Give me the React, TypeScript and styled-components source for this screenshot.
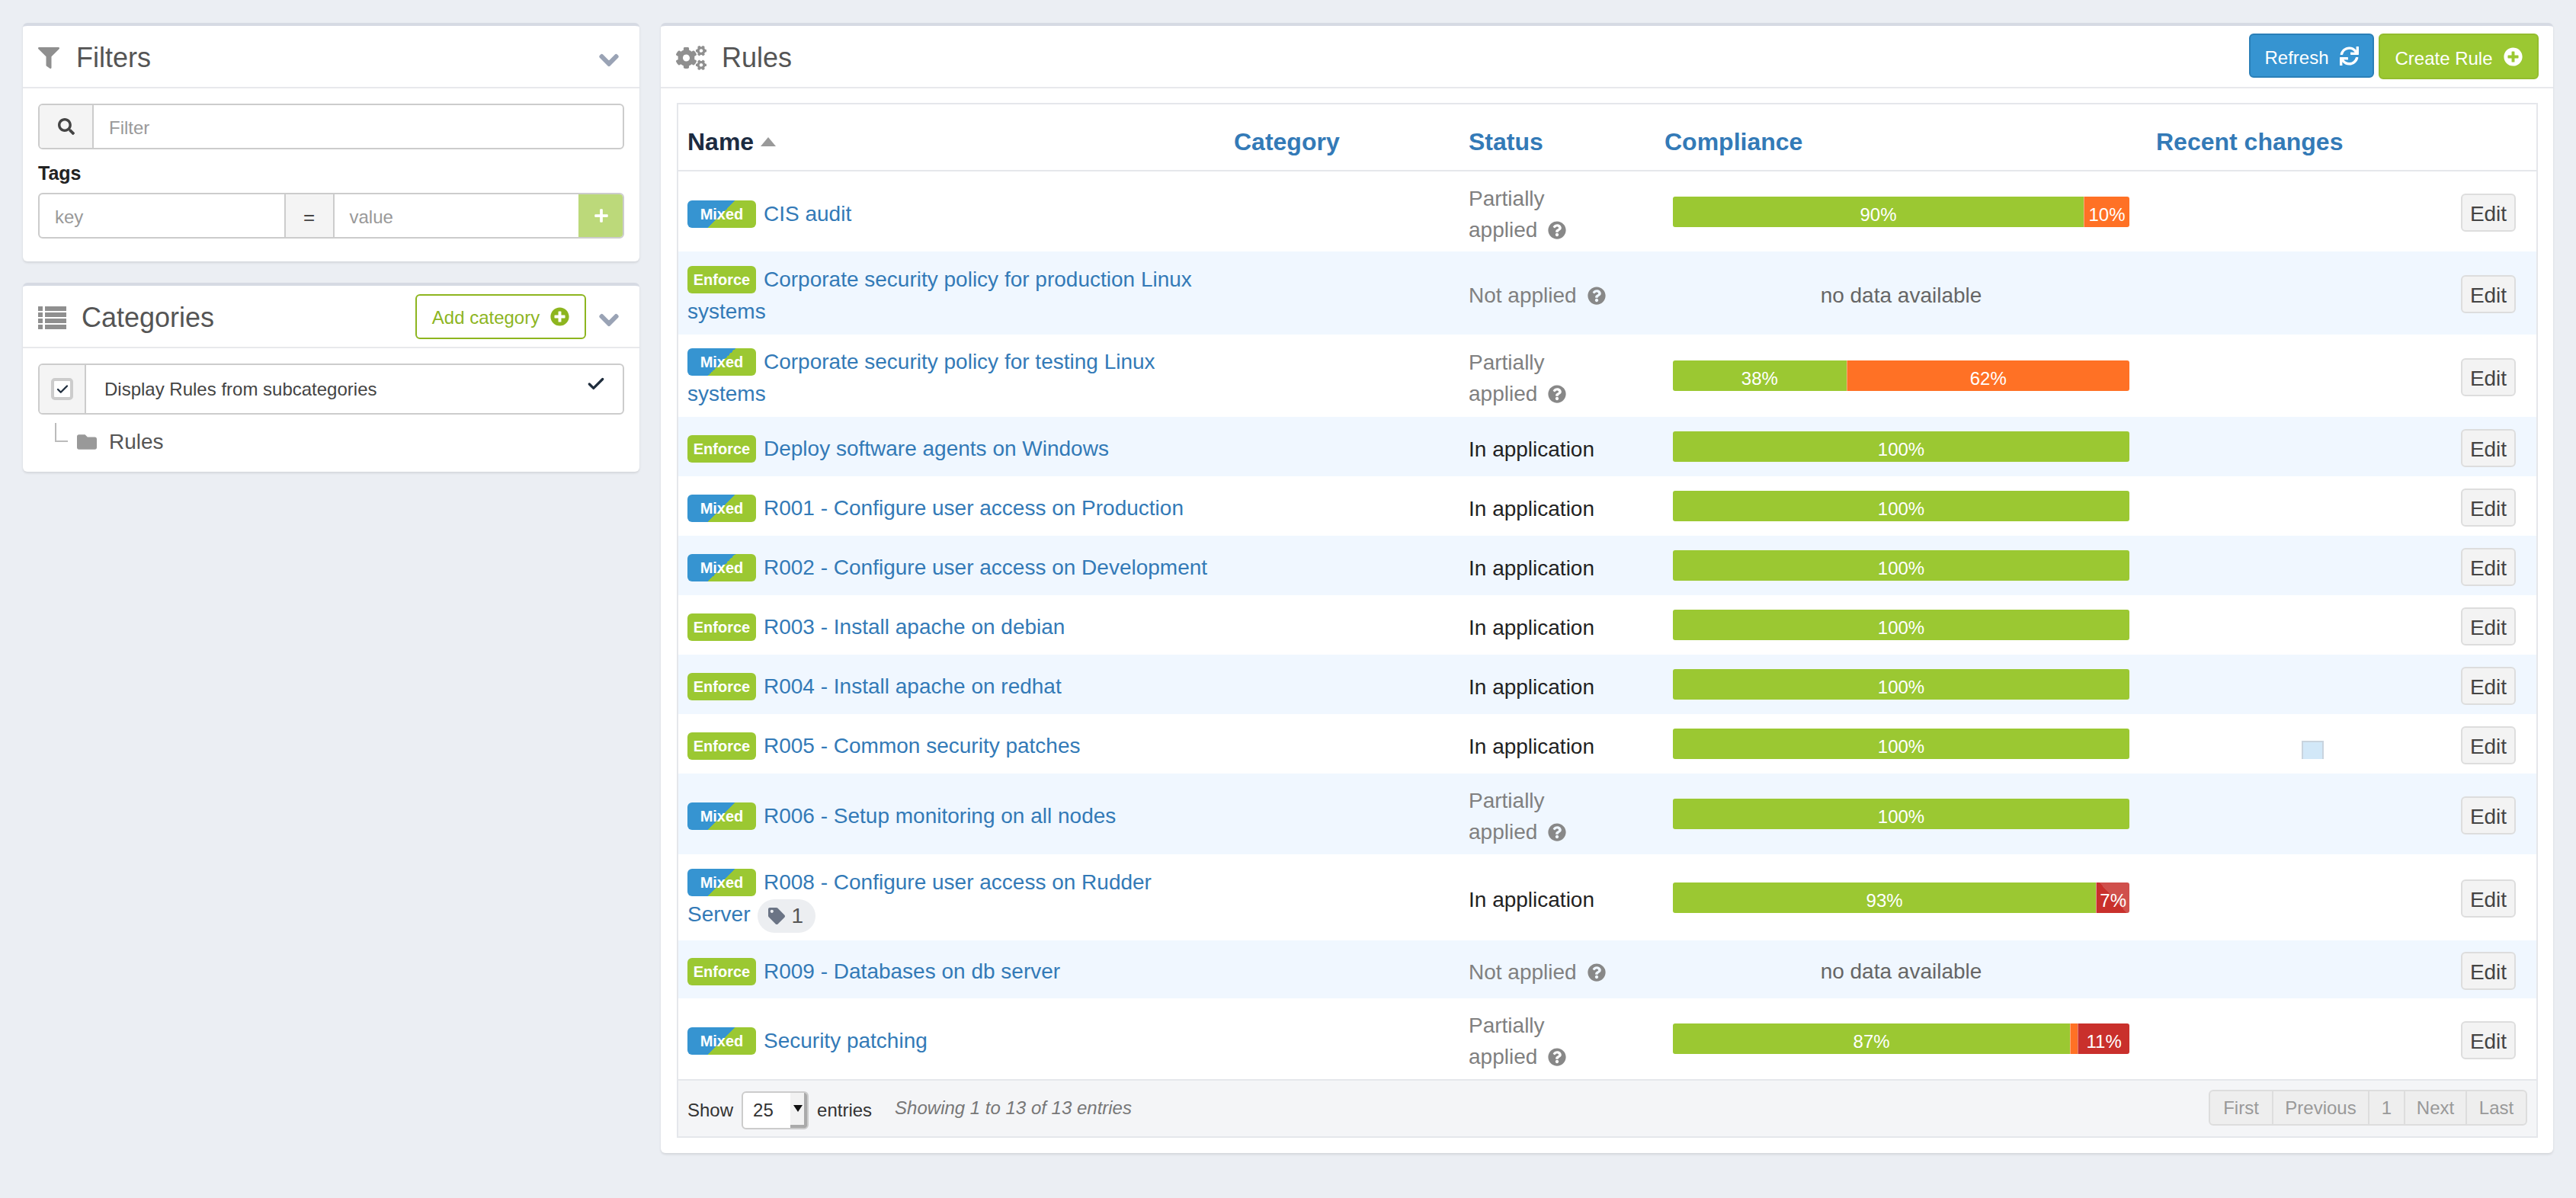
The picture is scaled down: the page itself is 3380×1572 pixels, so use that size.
import React from "react";
import styled, { createGlobalStyle } from "styled-components";
import { Check } from "lucide-react";
import {
  FaChevronDown,
  FaCogs,
  FaFilter,
  FaFolder,
  FaPlus,
  FaPlusCircle,
  FaQuestionCircle,
  FaSearch,
  FaSync,
  FaTag,
} from "react-icons/fa";

const GlobalStyle = createGlobalStyle`
  * { box-sizing: border-box; }
  html, body { margin: 0; padding: 0; }
  body {
    background: #ebeef3;
    font-family: "Liberation Sans", Arial, sans-serif;
    color: #333;
  }
`;

const Page = styled.div`
  display: flex;
  align-items: flex-start;
  gap: 28px;
  padding: 30px;
  min-height: 1572px;
`;

const LeftColumn = styled.div`
  width: 809px;
  flex: none;
  display: flex;
  flex-direction: column;
  gap: 28px;
`;

const Panel = styled.section<{ $grow?: boolean }>`
  background: #fff;
  border-top: 4px solid #d6dae3;
  border-radius: 6px;
  box-shadow: 0 2px 3px rgba(0, 0, 0, 0.1);
  ${(p) => (p.$grow ? "flex: 1; min-width: 0;" : "")}
`;

const PanelHead = styled.header`
  height: 82px;
  display: flex;
  align-items: center;
  padding: 0 20px;
  border-bottom: 2px solid #e8e9ec;
`;

const PanelTitle = styled.h2`
  margin: 0;
  flex: 1;
  display: flex;
  align-items: center;
  padding-top: 4px;
  font-size: 36px;
  font-weight: 400;
  color: #555;
`;

const TitleIcon = styled.span<{ $gap: number }>`
  display: inline-flex;
  color: #8f8f8f;
  margin-right: ${(p) => p.$gap}px;
`;

const Chevron = styled(FaChevronDown)`
  color: #9aa3b5;
  stroke: currentColor;
  stroke-width: 30;
  font-size: 28px;
  margin: 10px 6px 0 16px;
`;

const PanelBody = styled.div<{ $bottom: number }>`
  padding: 20px 20px ${(p) => p.$bottom}px;
`;

const InputGroup = styled.div<{ $height: number }>`
  display: flex;
  height: ${(p) => p.$height}px;
  border: 2px solid #ccc;
  border-radius: 6px;
  overflow: hidden;
`;

const Addon = styled.span<{ $width: number }>`
  flex: none;
  width: ${(p) => p.$width}px;
  display: flex;
  align-items: center;
  justify-content: center;
  background: #f4f4f4;
  color: #444;
  font-size: 22px;
  border-right: 2px solid #ccc;
`;

const EqualAddon = styled(Addon)`
  border-left: 2px solid #ccc;
  font-size: 26px;
  padding-top: 4px;
`;

const FieldText = styled.span`
  flex: 1 1 0;
  min-width: 0;
  display: flex;
  align-items: center;
  padding: 3px 20px 0;
  font-size: 24px;
  color: #999;
`;

const TagsLabel = styled.div`
  margin: 16px 0 11px;
  font-size: 25px;
  line-height: 30px;
  font-weight: 700;
  color: #222;
`;

const AddTag = styled.span`
  flex: none;
  width: 60px;
  margin: -2px -2px -2px 0;
  background: #bcd97a;
  color: #fff;
  display: flex;
  align-items: center;
  justify-content: center;
  font-size: 20px;
`;

const OutlineButton = styled.span`
  height: 59px;
  width: 224px;
  display: flex;
  align-items: center;
  justify-content: center;
  gap: 14px;
  padding-top: 3px;
  border: 2px solid #8db51f;
  border-radius: 6px;
  color: #8db51f;
  font-size: 24px;
  svg { font-size: 25px; margin-top: -3px; }
`;

const CheckBox = styled.span`
  width: 29px;
  height: 29px;
  border: 4px solid #ccc;
  border-radius: 5px;
  background: #fff;
  display: flex;
  align-items: center;
  justify-content: center;
  color: #1f2d3d;
`;

const OptionText = styled.span`
  flex: 1;
  display: flex;
  align-items: center;
  justify-content: space-between;
  padding: 0 22px 0 24px;
  font-size: 24px;
  color: #444;
  svg { color: #1f2d3d; margin-top: -14px; }
`;

const TreeRow = styled.div`
  display: flex;
  align-items: center;
  height: 55px;
  padding: 16px 0 0 22px;
  font-size: 28px;
  color: #555;
`;

const TreeElbow = styled.span`
  width: 17px;
  height: 25px;
  margin: -24px 12px 0 0;
  border-left: 2px solid #bbb;
  border-bottom: 2px solid #bbb;
`;

const FolderIcon = styled(FaFolder)`
  color: #999;
  font-size: 26px;
  margin-right: 16px;
`;

const HeadActions = styled.div`
  display: flex;
  gap: 6px;
  margin-right: -1px;
`;

const ActionButton = styled.span<{ $color: string; $edge: string; $width: number; $height: number }>`
  width: ${(p) => p.$width}px;
  height: ${(p) => p.$height}px;
  display: flex;
  align-items: center;
  justify-content: center;
  gap: 14px;
  padding-top: 6px;
  background: ${(p) => p.$color};
  border: 2px solid ${(p) => p.$edge};
  border-radius: 6px;
  color: #fff;
  font-size: 24px;
  svg { font-size: 25px; margin-top: -6px; }
`;

const RulesBody = styled.div`
  padding: 19px 20px 20px 21px;
`;

const TableBox = styled.div`
  border: 2px solid #e5e7eb;
`;

const Table = styled.table`
  width: 100%;
  table-layout: fixed;
  border-collapse: collapse;
`;

const HeadRow = styled.tr`
  height: 87px;
  border-bottom: 2px solid #e5e7eb;
`;

const HeadCell = styled.th<{ $active?: boolean; $width?: number }>`
  ${(p) => (p.$width ? `width: ${p.$width}px;` : "")}
  padding: 12px 12px 0 12px;
  text-align: left;
  font-size: 32px;
  font-weight: 700;
  color: ${(p) => (p.$active ? "#1c2b41" : "#337ab7")};
`;

const SortArrow = styled.span`
  display: inline-block;
  margin-left: 9px;
  vertical-align: 5px;
  border-left: 10px solid transparent;
  border-right: 10px solid transparent;
  border-bottom: 12px solid #999;
`;

const Row = styled.tr<{ $stripe: boolean; $height: number }>`
  height: ${(p) => p.$height}px;
  background: ${(p) => (p.$stripe ? "#f0f7ff" : "#fff")};
`;

const Cell = styled.td<{ $right?: boolean; $nudge?: boolean }>`
  padding: ${(p) => (p.$nudge ? "6px" : "0")} 12px 0;
  font-size: 28px;
  line-height: 42px;
  ${(p) => (p.$right ? "text-align: right; padding: 3px 27px 0 12px;" : "")}
`;

const Badge = styled.span<{ $mixed: boolean }>`
  display: inline-block;
  width: 90px;
  height: 36px;
  margin-right: 10px;
  border-radius: 6px;
  vertical-align: 2px;
  text-align: center;
  font-size: 20px;
  line-height: 36px;
  font-weight: 700;
  color: #fff;
  background: ${(p) =>
    p.$mixed ? "linear-gradient(135deg, #3694d1 50%, #9bc832 50%)" : "#9bc832"};
`;

const RuleLink = styled.a`
  color: #337ab7;
  text-decoration: none;
`;

const TagPill = styled.span`
  display: inline-flex;
  align-items: center;
  gap: 8px;
  height: 44px;
  margin-left: 10px;
  padding: 0 16px 0 14px;
  border-radius: 22px;
  background: #eceef1;
  color: #555;
  vertical-align: middle;
  svg { color: #6b7485; font-size: 22px; }
`;

const StatusText = styled.span<{ $muted: boolean }>`
  display: block;
  line-height: 41px;
  color: ${(p) => (p.$muted ? "#808080" : "#222")};
`;

const HelpIcon = styled(FaQuestionCircle)`
  color: #888;
  font-size: 24px;
  margin-left: 14px;
  vertical-align: -3px;
`;

const Bar = styled.div`
  display: flex;
  width: 599px;
  height: 40px;
  margin-left: 11px;
  border-radius: 3px;
  overflow: hidden;
`;

const BarPart = styled.div<{ $kind: string }>`
  display: flex;
  justify-content: center;
  padding-top: 5px;
  font-size: 24px;
  line-height: 38px;
  color: #fff;
  background: ${(p) =>
    p.$kind === "ok"
      ? "#9bc832"
      : p.$kind === "warn"
      ? "#ff7125"
      : p.$kind === "errorLight"
      ? "linear-gradient(48deg, #c9302c 50%, #d0504c 50%)"
      : "#c9302c"};
  & + & { border-left: 1px solid rgba(255, 255, 255, 0.4); }
`;

const NoData = styled.div`
  width: 599px;
  margin-left: 11px;
  text-align: center;
  color: #666;
`;

const EditButton = styled.span`
  display: inline-block;
  width: 72px;
  height: 50px;
  background: #f3f3f3;
  border: 2px solid #ddd;
  border-radius: 6px;
  text-align: center;
  font-size: 28px;
  line-height: 50px;
  color: #444;
  vertical-align: middle;
`;

const Footer = styled.div`
  height: 75px;
  display: flex;
  align-items: center;
  padding: 4px 12px 0;
  background: #f4f5f7;
  border-top: 2px solid #e5e7eb;
  font-size: 24px;
  color: #333;
`;

const SelectBox = styled.span`
  display: flex;
  width: 88px;
  height: 50px;
  margin: 0 11px;
  padding-left: 13px;
  align-items: center;
  justify-content: space-between;
  background: #fff;
  border: 2px solid #ccc;
  border-radius: 6px;
  overflow: hidden;
`;

const SelectArrow = styled.span`
  width: 22px;
  height: 46px;
  position: relative;
  background: #f2f2f2;
  border-right: 4px solid #aaa;
  border-bottom: 4px solid #aaa;
  &::after {
    content: "";
    position: absolute;
    left: 4px;
    top: 16px;
    border-left: 6px solid transparent;
    border-right: 6px solid transparent;
    border-top: 9px solid #111;
  }
`;

const Info = styled.span`
  flex: 1;
  margin: -6px 0 0 30px;
  font-style: italic;
  color: #777;
`;

const Pager = styled.div`
  display: flex;
  height: 47px;
  margin-top: -6px;
  border: 2px solid #ddd;
  border-radius: 6px;
  background: #eee;
  overflow: hidden;
`;

const PageCell = styled.span<{ $width: number }>`
  width: ${(p) => p.$width}px;
  display: flex;
  align-items: center;
  justify-content: center;
  color: #999;
  & + & { border-left: 2px solid #ddd; }
`;

const RecentChart = styled.svg`
  display: block;
`;

type Part = { value: number; kind: string; label?: string };

type Rule = {
  mode: "Mixed" | "Enforce";
  name: string;
  status: "partial" | "none" | "applied";
  parts?: Part[];
  height: number;
  tag?: boolean;
  recent?: boolean;
};

const full: Part[] = [{ value: 100, kind: "ok", label: "100%" }];

const rules: Rule[] = [
  { mode: "Mixed", name: "CIS audit", status: "partial", height: 106, parts: [{ value: 90, kind: "ok", label: "90%" }, { value: 10, kind: "warn", label: "10%" }] },
  { mode: "Enforce", name: "Corporate security policy for production Linux systems", status: "none", height: 109 },
  { mode: "Mixed", name: "Corporate security policy for testing Linux systems", status: "partial", height: 108, parts: [{ value: 38, kind: "ok", label: "38%" }, { value: 62, kind: "warn", label: "62%" }] },
  { mode: "Enforce", name: "Deploy software agents on Windows", status: "applied", height: 78, parts: full },
  { mode: "Mixed", name: "R001 - Configure user access on Production", status: "applied", height: 78, parts: full },
  { mode: "Mixed", name: "R002 - Configure user access on Development", status: "applied", height: 78, parts: full },
  { mode: "Enforce", name: "R003 - Install apache on debian", status: "applied", height: 78, parts: full },
  { mode: "Enforce", name: "R004 - Install apache on redhat", status: "applied", height: 78, parts: full },
  { mode: "Enforce", name: "R005 - Common security patches", status: "applied", height: 78, parts: full, recent: true },
  { mode: "Mixed", name: "R006 - Setup monitoring on all nodes", status: "partial", height: 106, parts: full },
  { mode: "Mixed", name: "R008 - Configure user access on Rudder Server", status: "applied", height: 113, tag: true, parts: [{ value: 92.7, kind: "ok", label: "93%" }, { value: 7.3, kind: "errorLight", label: "7%" }] },
  { mode: "Enforce", name: "R009 - Databases on db server", status: "none", height: 76 },
  { mode: "Mixed", name: "Security patching", status: "partial", height: 106, parts: [{ value: 87, kind: "ok", label: "87%" }, { value: 1.7, kind: "warn" }, { value: 11.3, kind: "error", label: "11%" }] },
];

const StatusCell: React.FC<{ status: Rule["status"] }> = ({ status }) => {
  if (status === "applied") return <StatusText $muted={false}>In application</StatusText>;
  if (status === "none")
    return (
      <StatusText $muted>
        Not applied
        <HelpIcon />
      </StatusText>
    );
  return (
    <StatusText $muted>
      Partially
      <br />
      applied
      <HelpIcon />
    </StatusText>
  );
};

const ListIcon: React.FC = () => (
  <svg width="37" height="30" viewBox="0 0 37 30" fill="#8f8f8f">
    {[0, 8, 16, 24].map((y) => (
      <g key={y}>
        <rect x="0" y={y} width="6" height="6" />
        <rect x="9" y={y} width="28" height="6" />
      </g>
    ))}
  </svg>
);

const App: React.FC = () => {
  return (
    <Page>
      <GlobalStyle />
      <LeftColumn>
        <Panel>
          <PanelHead>
            <PanelTitle>
              <TitleIcon $gap={22}>
                <FaFilter size={28} />
              </TitleIcon>
              Filters
            </PanelTitle>
            <Chevron />
          </PanelHead>
          <PanelBody $bottom={30}>
            <InputGroup $height={60}>
              <Addon $width={71}>
                <FaSearch />
              </Addon>
              <FieldText>Filter</FieldText>
            </InputGroup>
            <TagsLabel>Tags</TagsLabel>
            <InputGroup $height={60}>
              <FieldText>key</FieldText>
              <EqualAddon $width={66}>=</EqualAddon>
              <FieldText>value</FieldText>
              <AddTag>
                <FaPlus />
              </AddTag>
            </InputGroup>
          </PanelBody>
        </Panel>
        <Panel>
          <PanelHead>
            <PanelTitle>
              <TitleIcon $gap={20}>
                <ListIcon />
              </TitleIcon>
              Categories
            </PanelTitle>
            <OutlineButton>
              Add category
              <FaPlusCircle />
            </OutlineButton>
            <Chevron />
          </PanelHead>
          <PanelBody $bottom={20}>
            <InputGroup $height={67}>
              <Addon $width={61}>
                <CheckBox>
                  <Check size={18} strokeWidth={3} />
                </CheckBox>
              </Addon>
              <OptionText>
                Display Rules from subcategories
                <Check size={26} strokeWidth={3} />
              </OptionText>
            </InputGroup>
            <TreeRow>
              <TreeElbow />
              <FolderIcon />
              Rules
            </TreeRow>
          </PanelBody>
        </Panel>
      </LeftColumn>
      <Panel $grow>
        <PanelHead>
          <PanelTitle>
            <TitleIcon $gap={20}>
              <FaCogs size={40} />
            </TitleIcon>
            Rules
          </PanelTitle>
          <HeadActions>
            <ActionButton $color="#3694d1" $edge="#2a7fb8" $width={164} $height={58}>
              Refresh
              <FaSync />
            </ActionButton>
            <ActionButton $color="#9bc832" $edge="#93bd2e" $width={210} $height={60}>
              Create Rule
              <FaPlusCircle />
            </ActionButton>
          </HeadActions>
        </PanelHead>
        <RulesBody>
          <TableBox>
            <Table>
              <thead>
                <HeadRow>
                  <HeadCell $active $width={717}>
                    Name
                    <SortArrow />
                  </HeadCell>
                  <HeadCell $width={308}>Category</HeadCell>
                  <HeadCell $width={257}>Status</HeadCell>
                  <HeadCell $width={645}>Compliance</HeadCell>
                  <HeadCell>Recent changes</HeadCell>
                  <HeadCell $width={124} />
                </HeadRow>
              </thead>
              <tbody>
                {rules.map((rule, i) => (
                  <Row key={rule.name} $stripe={i % 2 === 1} $height={rule.height}>
                    <Cell $nudge>
                      <Badge $mixed={rule.mode === "Mixed"}>{rule.mode}</Badge>
                      <RuleLink>{rule.name}</RuleLink>
                      {rule.tag && (
                        <TagPill>
                          <FaTag />1
                        </TagPill>
                      )}
                    </Cell>
                    <Cell />
                    <Cell $nudge>
                      <StatusCell status={rule.status} />
                    </Cell>
                    <Cell $nudge={!rule.parts}>
                      {rule.parts ? (
                        <Bar>
                          {rule.parts.map((part) => (
                            <BarPart key={part.kind} $kind={part.kind} style={{ width: `${part.value}%` }}>
                              {part.label}
                            </BarPart>
                          ))}
                        </Bar>
                      ) : (
                        <NoData>no data available</NoData>
                      )}
                    </Cell>
                    <Cell>
                      {rule.recent && (
                        <RecentChart width="240" height="60" viewBox="0 0 240 60">
                          <rect x="191" y="26" width="29" height="24" fill="#d2e8f8" />
                          <path d="M192 50V27H219V50" fill="none" stroke="#c9d4de" strokeWidth="2" />
                        </RecentChart>
                      )}
                    </Cell>
                    <Cell $right>
                      <EditButton>Edit</EditButton>
                    </Cell>
                  </Row>
                ))}
              </tbody>
            </Table>
            <Footer>
              Show
              <SelectBox>
                25
                <SelectArrow />
              </SelectBox>
              entries
              <Info>Showing 1 to 13 of 13 entries</Info>
              <Pager>
                <PageCell $width={81}>First</PageCell>
                <PageCell $width={126}>Previous</PageCell>
                <PageCell $width={47}>1</PageCell>
                <PageCell $width={81}>Next</PageCell>
                <PageCell $width={79}>Last</PageCell>
              </Pager>
            </Footer>
          </TableBox>
        </RulesBody>
      </Panel>
    </Page>
  );
};

export default App;
